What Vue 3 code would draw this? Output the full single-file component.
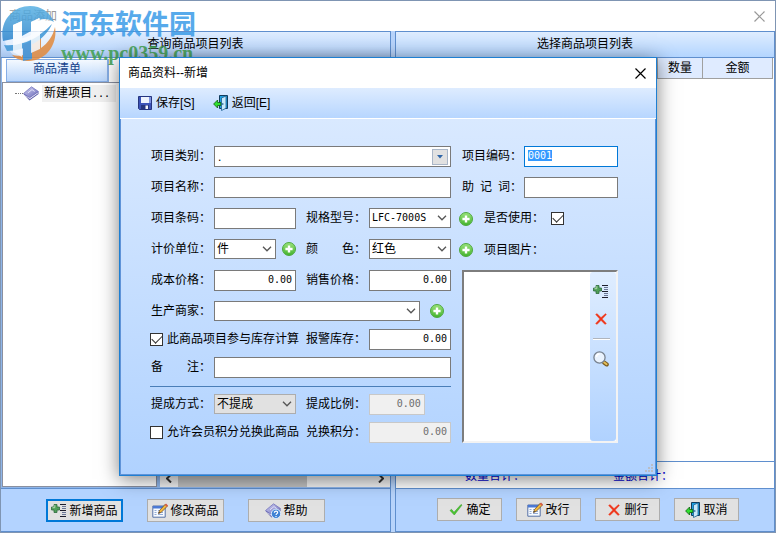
<script setup>
import { onMounted, ref } from 'vue'

const codeInput = ref(null)
const form = ref({
  category: '.',
  code: '0001',
  name: '',
  mnemonic: '',
  barcode: '',
  model: 'LFC-7000S',
  inUse: true,
  unit: '件',
  color: '红色',
  cost: '0.00',
  price: '0.00',
  maker: '',
  stock: true,
  alarm: '0.00',
  remark: '',
  mode: '不提成',
  ratio: '0.00',
  redeem: false,
  points: '0.00'
})

const leftActions = [
  { text: '新增商品', icon: 'add-list', active: true },
  { text: '修改商品', icon: 'edit' },
  { text: '帮助', icon: 'help' }
]
const rightActions = [
  { text: '确定', icon: 'check' },
  { text: '改行', icon: 'edit' },
  { text: '删行', icon: 'cross' },
  { text: '取消', icon: 'door' }
]

onMounted(() => {
  codeInput.value.focus()
  codeInput.value.select()
})
</script>

<template>
  <svg class="defs" aria-hidden="true">
    <defs>
      <linearGradient id="g-green" x1="0" y1="0" x2="0" y2="1">
        <stop offset="0" stop-color="#9be37c" /><stop offset="1" stop-color="#43b32c" />
      </linearGradient>
      <linearGradient id="g-book" x1="0" y1="0" x2="1" y2="1">
        <stop offset="0" stop-color="#d4d4f6" /><stop offset="1" stop-color="#6464b4" />
      </linearGradient>
      <linearGradient id="g-logo" x1="0" y1="0" x2="0" y2="1">
        <stop offset="0" stop-color="#5ab2e4" /><stop offset="1" stop-color="#2f86cc" />
      </linearGradient>
      <symbol id="i-plus" viewBox="0 0 14 14">
        <circle cx="7" cy="7" r="6.5" fill="url(#g-green)" stroke="#4fa840" />
        <path d="M5.8 3.4h2.4v2.4h2.4v2.4H8.2v2.4H5.8V8.2H3.4V5.8h2.4z" fill="#fff" />
      </symbol>
      <symbol id="i-chevron" viewBox="0 0 10 6">
        <path d="M1 .8l4 4 4-4" fill="none" stroke="#555" stroke-width="1.3" />
      </symbol>
      <symbol id="i-close" viewBox="0 0 11 11">
        <path d="M.5.5l10 10M10.500.5l-10 10" fill="none" stroke="currentColor" stroke-width="1.2" />
      </symbol>
      <symbol id="i-save" viewBox="0 0 16 16">
        <path d="M1.500 1.500h13v13h-12l-1-1z" fill="#3c53b8" stroke="#26357e" />
        <path d="M4 2h8v6H4z" fill="#eef3fd" />
        <path d="M12 2h2v6h-2z" fill="#7f94e0" />
        <path d="M4 10h8v4.500H4z" fill="#26357e" />
        <path d="M8.500 10.500h2.500v3.500H8.500z" fill="#f2f4fb" />
      </symbol>
      <symbol id="i-door" viewBox="0 0 16 16">
        <path d="M6.500.5h8v13h-8z" fill="#1f9fe0" stroke="#123c5c" />
        <path d="M8.500 3l4.500-2v12.300l-4.500 2.200z" fill="#c8e9fb" stroke="#1d6090" stroke-width=".8" />
        <path d="M9.800 8v2" stroke="#1d6090" />
        <path d="M.6 9l4-4v2.500h3.200v3H4.600V13z" fill="#2fe02f" stroke="#0c5a0c" stroke-width=".8" />
      </symbol>
      <symbol id="i-book" viewBox="0 0 16 16">
        <path d="M.5 8l6 6.500L15.500 8V6z" fill="#5757a6" />
        <path d="M1.500 9l5.200 4.300 8.300-6v-1L6.500 11z" fill="#eeeefa" />
        <path d="M.5 7.500L8.500.8l7 4.700-8.800 6.300z" fill="url(#g-book)" stroke="#6c6cb8" stroke-width=".7" />
        <path d="M5 6.800l4-3.200 2.700 1.900" fill="none" stroke="#f0f0ff" stroke-width=".8" />
      </symbol>
      <symbol id="i-help" viewBox="0 0 16 16">
        <use href="#i-book" />
        <circle cx="11" cy="10.800" r="4.700" fill="#3f82d4" stroke="#d9ebff" />
        <path d="M9.400 9.800c0-2.400 3.400-2.200 3.200-.2-.1 1-1.500 1.100-1.500 2.300M11 13v1" fill="none" stroke="#fff" stroke-width="1.200" />
      </symbol>
      <symbol id="i-add-list" viewBox="0 0 16 16">
        <path d="M3 1.500h3V4h2.500v3H6v2.500H3V7H.5V4H3z" fill="#4f9f58" stroke="#2d6b3c" stroke-width=".8" />
        <path d="M3.800 2.200v2.500H1.500" fill="none" stroke="#b5dcb0" />
        <path d="M9 1.500h6M9 7.500h6M9 13.500h6" stroke="#1d1d2b" />
        <path d="M11 3.500h4M11 5.500h4M11 9.500h4M11 11.500h4" stroke="#6a7694" />
      </symbol>
      <symbol id="i-edit" viewBox="0 0 16 16">
        <path d="M.8 3h12.400v11.200H.8z" fill="#f8fbff" stroke="#5470a6" />
        <path d="M1 3h12v2.500H1z" fill="#4b79d4" />
        <path d="M2.500 7.500h2M2.500 9.500h2M2.500 11.500h2M6 7.500h5M6 9.500h5M6 11.500h5" stroke="#93acd6" />
        <path d="M6.500 10.500l1-3 6-6.500 2 2-6.200 6.300z" fill="#f2b93d" stroke="#684520" stroke-width=".7" />
        <path d="M12.700 2l1.300-1.400 2 2-1.200 1.300z" fill="#d9604a" />
        <path d="M6.500 10.500l.5-1.500 1 1z" fill="#222" />
      </symbol>
      <symbol id="i-check" viewBox="0 0 16 16">
        <path d="M2 8.500l1.500-1.200 2.500 3L13 2.500l1 .6L6.300 13z" fill="#4cc832" stroke="#339423" stroke-width=".5" />
      </symbol>
      <symbol id="i-cross" viewBox="0 0 16 16">
        <path d="M2.500 3.500L4 2.500l4 4 4.500-4 1 1L9.300 8l4.200 4.500-1.500 1L8 9.500l-4 4-1.500-1L6.700 8z" fill="#ee3218" stroke="#f0644a" stroke-width=".4" />
      </symbol>
      <symbol id="i-lens" viewBox="0 0 16 16">
        <path d="M11 11.500l2.800 2" stroke="#7a5c20" stroke-width="4" stroke-linecap="round" />
        <path d="M11 11.200l2.600 2" stroke="#e6bf58" stroke-width="2" stroke-linecap="round" />
        <circle cx="6.500" cy="6.500" r="5.600" fill="#eaf3fe" stroke="#78828f" stroke-width="1.300" />
        <path d="M3.500 6a3 3 0 0 1 3-3" fill="none" stroke="#fff" stroke-width="1.500" />
      </symbol>
    </defs>
  </svg>

  <main class="window">
    <header class="titlebar">
      <span>商品添加</span>
      <button class="close" aria-label="关闭"><svg><use href="#i-close" /></svg></button>
    </header>

    <div class="panels">
      <section class="panel">
        <h2 class="bar">查询商品项目列表</h2>
        <div class="browse">
          <div class="catalog">
            <div class="tabs"><button class="tab">商品清单</button></div>
            <div class="tree">
              <div class="node">
                <i class="twig"></i>
                <svg class="icon"><use href="#i-book" /></svg>
                <span class="node-text">新建项目<span class="mono">...</span></span>
              </div>
            </div>
          </div>
          <div class="results">
            <div class="scroll">
              <button aria-label="向左"><svg viewBox="0 0 6 8"><path d="M5 0L1 4l4 4" /></svg></button>
              <i class="thumb"></i>
              <button aria-label="向右"><svg viewBox="0 0 6 8"><path d="M1 0l4 4-4 4" /></svg></button>
            </div>
          </div>
        </div>
        <footer class="actions">
          <button v-for="a in leftActions" :key="a.text" class="btn" :class="{ active: a.active }">
            <svg class="icon"><use :href="'#i-' + a.icon" /></svg>{{ a.text }}
          </button>
        </footer>
      </section>

      <section class="panel right">
        <h2 class="bar">选择商品项目列表</h2>
        <div class="chosen">
          <table>
            <thead>
              <tr><th></th><th class="qty">数量</th><th class="sum">金额</th></tr>
            </thead>
          </table>
        </div>
        <div class="totals"><span>数量合计：</span><span>金额合计：</span></div>
        <footer class="actions compact">
          <button v-for="a in rightActions" :key="a.text" class="btn">
            <svg class="icon"><use :href="'#i-' + a.icon" /></svg>{{ a.text }}
          </button>
        </footer>
      </section>
    </div>

    <div class="brand">
      <svg class="logo" viewBox="0 0 56 58">
        <ellipse cx="28" cy="29" rx="25" ry="27" fill="#fff" opacity=".6" />
        <path d="M2 36C-2 16 12 1 29 1c11 0 20 6 24 16-5-3-10-4-15-2v-2l-8 4v9l-9 5V16l-9 4v14z" fill="url(#g-logo)" />
        <path d="M54 22c3 17-9 34-26 34-7 0-13-2-17-6 4 1 8 1 12 0l8-2V37l9-4v10c7-5 12-12 14-21z" fill="#e38a3c" />
        <path d="M3 40c10 2 32-4 48-21C45 34 25 46 6 46z" fill="#3f97d6" />
        <path d="M22 40l9-4v18l-9 2z" fill="#3f8fd0" />
        <path d="M12 20l9-4v36l-9-5z" fill="#fff" opacity=".85" />
        <path d="M30 17l9-4v31l-9 4z" fill="#fff" opacity=".85" />
        <path d="M12 35c9-1 18-4 27-10v5c-9 6-18 9-27 10z" fill="#fff" opacity=".85" />
      </svg>
      <div>
        <strong>河东软件园</strong>
        <em>www.pc0359.cn</em>
      </div>
    </div>

    <section class="dialog" role="dialog" aria-labelledby="dialog-title">
      <header class="dialog-title">
        <span id="dialog-title">商品资料--新增</span>
        <button class="close" aria-label="关闭"><svg><use href="#i-close" /></svg></button>
      </header>
      <nav class="toolbar">
        <button><svg class="icon"><use href="#i-save" /></svg>保存[S]</button>
        <button><svg class="icon"><use href="#i-door" /></svg>返回[E]</button>
      </nav>

      <form class="sheet" @submit.prevent>
        <div class="fields">
          <div class="rows">
            <div class="row wide">
              <label for="category">项目类别：</label>
              <span class="picker">
                <input id="category" v-model="form.category">
                <button type="button" aria-label="选择类别"><svg viewBox="0 0 6 4"><path d="M0 0h6L3 3.500z" /></svg></button>
              </span>
            </div>
            <div class="row wide">
              <label for="name">项目名称：</label>
              <input id="name" v-model="form.name" class="box">
            </div>
            <div class="row">
              <label for="barcode">项目条码：</label>
              <input id="barcode" v-model="form.barcode" class="box">
              <label for="model">规格型号：</label>
              <span class="combo mono">
                <select id="model" v-model="form.model"><option>LFC-7000S</option></select>
                <svg><use href="#i-chevron" /></svg>
              </span>
            </div>
            <div class="row">
              <label for="unit">计价单位：</label>
              <span class="with-plus">
                <span class="combo">
                  <select id="unit" v-model="form.unit"><option>件</option></select>
                  <svg><use href="#i-chevron" /></svg>
                </span>
                <button type="button" class="plus" aria-label="添加单位"><svg><use href="#i-plus" /></svg></button>
              </span>
              <label for="color">颜　　色：</label>
              <span class="combo">
                <select id="color" v-model="form.color"><option>红色</option></select>
                <svg><use href="#i-chevron" /></svg>
              </span>
            </div>
            <div class="row">
              <label for="cost">成本价格：</label>
              <input id="cost" v-model="form.cost" class="box num">
              <label for="price">销售价格：</label>
              <input id="price" v-model="form.price" class="box num">
            </div>
            <div class="row wide">
              <label for="maker">生产商家：</label>
              <span class="with-plus roomy">
                <span class="combo">
                  <select id="maker" v-model="form.maker"><option></option></select>
                  <svg><use href="#i-chevron" /></svg>
                </span>
                <button type="button" class="plus" aria-label="添加商家"><svg><use href="#i-plus" /></svg></button>
              </span>
            </div>
          </div>

          <div class="rows tight">
            <div class="row">
              <label class="tick"><input v-model="form.stock" type="checkbox">此商品项目参与库存计算</label>
              <label for="alarm">报警库存：</label>
              <input id="alarm" v-model="form.alarm" class="box num">
            </div>
            <div class="row wide">
              <label for="remark">备　　注：</label>
              <input id="remark" v-model="form.remark" class="box">
            </div>
          </div>

          <div class="rows tight ruled">
            <div class="row">
              <label for="mode">提成方式：</label>
              <span class="combo flat">
                <select id="mode" v-model="form.mode"><option>不提成</option></select>
                <svg><use href="#i-chevron" /></svg>
              </span>
              <label for="ratio">提成比例：</label>
              <input id="ratio" v-model="form.ratio" class="box num short" disabled>
            </div>
            <div class="row">
              <label class="tick"><input v-model="form.redeem" type="checkbox">允许会员积分兑换此商品</label>
              <label for="points">兑换积分：</label>
              <input id="points" v-model="form.points" class="box num" disabled>
            </div>
          </div>
        </div>

        <div class="side">
          <div class="side-row">
            <label for="code">项目编码：</label>
            <input id="code" ref="codeInput" v-model="form.code" class="box">
          </div>
          <div class="side-row">
            <label for="mnemonic">助&ensp;记&ensp;词：</label>
            <input id="mnemonic" v-model="form.mnemonic" class="box">
          </div>
          <div class="side-row extra">
            <button type="button" class="plus" aria-label="添加型号"><svg><use href="#i-plus" /></svg></button>
            <label for="in-use">是否使用：</label>
            <input id="in-use" v-model="form.inUse" type="checkbox">
          </div>
          <div class="side-row extra">
            <button type="button" class="plus" aria-label="添加颜色"><svg><use href="#i-plus" /></svg></button>
            <span>项目图片：</span>
          </div>
          <div class="picture">
            <div class="picture-tools">
              <button type="button" aria-label="添加图片"><svg class="icon"><use href="#i-add-list" /></svg></button>
              <button type="button" aria-label="删除图片"><svg class="icon"><use href="#i-cross" /></svg></button>
              <hr>
              <button type="button" aria-label="查看图片"><svg class="icon"><use href="#i-lens" /></svg></button>
            </div>
          </div>
        </div>
      </form>
      <svg class="grip" viewBox="0 0 8 8">
        <path d="M6 0h2v2H6zM3 3h2v2H3zM6 3h2v2H6zM0 6h2v2H0zM3 6h2v2H3zM6 6h2v2H6z" fill="#b9bdc6" />
      </svg>
    </section>
  </main>
</template>

<style>
body {
  background: #8f9fb6;
}
</style>

<style scoped>
.defs {
  position: absolute;
  width: 0;
  height: 0;
}

.window,
.window * {
  box-sizing: border-box;
}

.window {
  position: relative;
  display: flex;
  flex-direction: column;
  min-height: 100vh;
  border: 1px solid #7f95b3;
  background: #fff;
  color: #000;
  font: 12px/16px "Liberation Sans", "Noto Sans CJK SC", sans-serif;
}

button,
input,
select {
  margin: 0;
  padding: 0;
  border: 0;
  border-radius: 0;
  outline: 0;
  background: none;
  color: inherit;
  font: inherit;
}

.icon {
  flex: none;
  width: 16px;
  height: 16px;
}

.mono {
  font-family: "DejaVu Sans Mono", monospace;
  font-size: 10px;
}

.titlebar,
.dialog-title {
  display: flex;
  align-items: center;
  justify-content: space-between;
  height: 30px;
  padding: 0 10px 0 8px;
  background: #fff;
}

.titlebar {
  color: #999;
}

.close {
  display: flex;
}

.close svg {
  width: 11px;
  height: 11px;
}

.panels {
  flex: 1;
  display: grid;
  grid-template-columns: 390fr 380fr;
  gap: 4px;
  background: #b8d4fb;
}

.panel {
  display: flex;
  flex-direction: column;
  min-width: 0;
  border: solid #5f8fce;
  border-width: 1px 1px 0 0;
}

.panel.right {
  border-left-width: 1px;
}

.bar {
  height: 26px;
  margin: 0;
  border-bottom: 1px solid #5f8fce;
  background: linear-gradient(#dfedff, #c3dcfd 60%, #a6c4ec);
  font-size: 12px;
  font-weight: normal;
  line-height: 25px;
  text-align: center;
}

.right .bar {
  background: linear-gradient(#dfedff, #b3d5ff);
}

.browse {
  flex: 1;
  display: flex;
  gap: 3px;
  padding: 0 0 1px 1px;
  background: #8fb6ea;
}

.catalog {
  flex: 0 0 40%;
  display: flex;
  flex-direction: column;
  background: #fff;
}

.tabs {
  padding: 1px 0 0 4px;
}

.tab {
  width: 103px;
  height: 23px;
  padding-bottom: 4px;
  border: 1px solid #86aee6;
  border-width: 1px 2px 1px 1px;
  background: linear-gradient(#f4f9ff, #b9d6fb);
  color: #15428b;
}

.tree {
  flex: 1;
  padding: 2px 0 0 12px;
  border: 1px solid #8a90a0;
}

.node {
  display: flex;
  align-items: center;
}

.twig {
  width: 8px;
  border-top: 1px dotted #777;
}

.node-text {
  margin-left: 3px;
  padding: 0 6px 0 2px;
  background: #f0f0f0;
}

.results {
  flex: 1;
  display: flex;
  flex-direction: column;
  justify-content: flex-end;
  background: #fff;
}

.scroll {
  display: flex;
  height: 17px;
  background: #f0f0f0;
}

.scroll button {
  width: 18px;
  line-height: 0;
}

.scroll svg {
  width: 6px;
  height: 9px;
  fill: none;
  stroke: #333;
  stroke-width: 2;
}

.scroll button:last-child {
  margin-left: auto;
}

.thumb {
  width: 56%;
  background: #c0c0c0;
}

.chosen {
  flex: 1;
  padding-right: 1px;
  background: #fff;
}

.chosen table {
  width: 100%;
  border-collapse: collapse;
}

.chosen th {
  height: 20px;
  padding: 0;
  border: 1px solid #a0a0a0;
  border-top: 0;
  background: #dfebff;
  font-weight: normal;
}

.qty {
  width: 45px;
}

.sum {
  width: 70px;
}

.totals {
  display: flex;
  gap: 88px;
  height: 27px;
  padding: 6px 69px;
  border-top: 1px solid #5f8fce;
  background: #fff;
  color: #0000d0;
}

.actions {
  display: flex;
  gap: 24px;
  height: 44px;
  padding: 10px 0 0 45px;
  border: solid #5f8fce;
  border-width: 1px 0;
  background: #b3d3ff;
}

.actions.compact {
  gap: 14px;
  padding: 9px 0 0 41px;
}

.btn {
  display: flex;
  align-items: center;
  justify-content: center;
  gap: 2px;
  width: 77px;
  height: 23px;
  border: 1px solid #adadad;
  background: #e1e1e1;
  white-space: nowrap;
}

.compact .btn {
  width: 65px;
}

.btn.active {
  border: 2px solid #0078d7;
}

.brand {
  position: absolute;
  top: 4px;
  left: 0;
  display: flex;
  gap: 4px;
  opacity: .85;
}

.logo {
  width: 56px;
  height: 58px;
}

.brand strong,
.brand em {
  display: block;
  font-style: normal;
}

.brand strong {
  color: #3a9ce8;
  font: bold 27px/36px "Noto Sans CJK SC", sans-serif;
}

.brand em {
  color: #3f9f4f;
  font: bold 20px/24px "Liberation Serif", serif;
}

.dialog {
  position: absolute;
  top: 56px;
  right: 118px;
  left: 118px;
  border: 1px solid #1e7fd2;
  background: #fff;
  box-shadow: 0 3px 18px rgba(0, 0, 0, .5);
}

.toolbar {
  display: flex;
  gap: 18px;
  height: 30px;
  padding: 0 17px;
  background: linear-gradient(#deecff, #b7d6ff);
}

.toolbar button {
  display: flex;
  align-items: center;
  gap: 3px;
}

.sheet {
  display: flex;
  gap: 8px;
  margin-top: 1px;
  padding: 27px 37px 31px 29px;
  border: solid #5f93d8;
  border-width: 0 1px 1px;
  background: linear-gradient(#d9e9ff, #b0d2ff);
}

.fields {
  flex: 1;
}

.rows {
  display: grid;
  gap: 10px;
}

.rows.tight {
  gap: 7px;
  margin-top: 7px;
}

.rows.ruled {
  margin-top: 8px;
  padding-top: 7px;
  border-top: 1px solid #4a7eb8;
}

.row {
  display: grid;
  grid-template-columns: 64px 1fr 73px 1fr;
  align-items: start;
  height: 21px;
}

.row.wide {
  grid-template-columns: 64px 1fr;
}

.row label,
.side-row label {
  padding-left: 1px;
  line-height: 21px;
  white-space: nowrap;
}

.row label:nth-last-child(2):not(:first-child),
.tick + label {
  padding-left: 10px;
}

.row .tick {
  grid-column: span 2;
  display: flex;
  align-items: center;
  gap: 4px;
  padding-left: 0;
}

.box,
.picker {
  width: 100%;
  min-width: 0;
  height: 21px;
  border: 1px solid #7a7a7a;
  background: #fff;
}

.box {
  padding: 0 3px 3px;
  font: 10px/16px "DejaVu Sans Mono", monospace;
}

.box:focus {
  border-color: #0078d7;
}

.box::selection {
  background: #3399ff;
  color: #fff;
}

.num {
  text-align: right;
}

.box:disabled {
  border-color: #c8c8c8;
  background: #f0f0f0;
  color: #6d6d6d;
}

.short {
  width: 68%;
}

.picker {
  display: flex;
  align-items: center;
  padding: 0 2px 0 3px;
}

.picker input {
  flex: 1;
  min-width: 0;
}

.picker button {
  display: grid;
  place-items: center;
  width: 16px;
  height: 16px;
  border: 1px solid #a9b6c8;
  background: #e1e1e1;
}

.picker svg {
  width: 6px;
  height: 4px;
  fill: #2f66a8;
}

.combo {
  flex: 1;
  display: grid;
  align-items: center;
  min-width: 0;
  height: 20px;
  border: 1px solid #7a7a7a;
  background: #fff;
}

.combo select {
  grid-area: 1 / 1;
  appearance: none;
  width: 100%;
  height: 18px;
  padding-left: 2px;
}

.combo svg {
  grid-area: 1 / 1;
  justify-self: end;
  width: 10px;
  height: 6px;
  margin-right: 3px;
  pointer-events: none;
}

.combo.flat {
  border-color: #adadad;
  background: #e1e1e1;
}

.with-plus {
  display: flex;
  align-items: center;
  gap: 6px;
}

.roomy {
  gap: 10px;
  padding-right: 7px;
}

.plus {
  display: flex;
}

.plus svg {
  width: 14px;
  height: 14px;
}

input[type="checkbox"] {
  appearance: none;
  flex: none;
  display: grid;
  place-items: center;
  width: 13px;
  height: 13px;
  border: 1px solid #333;
  background: #fff;
}

input[type="checkbox"]:checked::after {
  content: "";
  width: 9px;
  height: 5px;
  margin-bottom: 3px;
  border: solid #333;
  border-width: 0 0 1px 1px;
  transform: rotate(-45deg);
}

.side {
  display: flex;
  flex-direction: column;
  gap: 10px;
  width: 159px;
}

.side-row {
  display: flex;
  align-items: center;
  height: 21px;
}

.side-row label:first-child {
  flex: 0 0 65px;
  padding-left: 3px;
}

.side-row.extra {
  gap: 7px;
}

.extra label,
.extra span {
  padding-left: 4px;
}

.picture {
  flex: 1;
  display: flex;
  justify-content: flex-end;
  margin-left: 3px;
  border: 2px solid;
  border-color: #7d7d7d #f3f3f3 #f3f3f3 #7d7d7d;
  background: #fff;
}

.picture-tools {
  display: flex;
  flex-direction: column;
  align-items: center;
  gap: 11px;
  width: 26px;
  padding: 12px 4px 0 0;
  border-radius: 3px;
  background: linear-gradient(#dfedff, #b0d2ff);
}

.picture-tools button {
  display: flex;
}

.picture-tools hr {
  width: 17px;
  height: 2px;
  margin: 0;
  border: 0;
  border-top: 1px solid #b0b5bd;
  background: #fff;
}

.grip {
  position: absolute;
  right: 3px;
  bottom: 3px;
  width: 8px;
  height: 8px;
}
</style>
